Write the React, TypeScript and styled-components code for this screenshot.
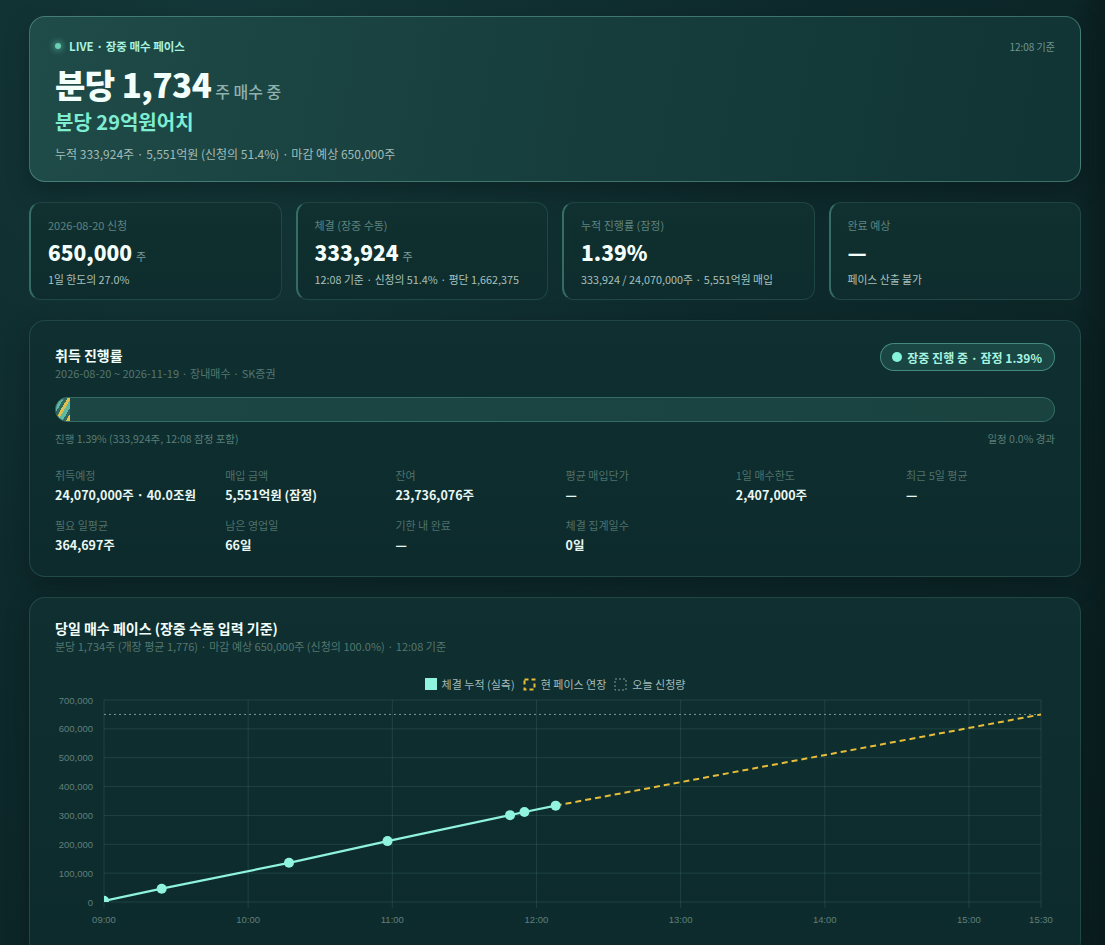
import React from 'react';
import styled, { createGlobalStyle } from 'styled-components';

const GlobalStyle = createGlobalStyle`
  html, body {
    margin: 0;
    padding: 0;
    background: #0c2426;
  }
  body {
    font-family: 'Noto Sans CJK KR', 'Noto Sans', sans-serif;
    color: #e8f5f2;
    background:
      linear-gradient(90deg, rgba(0, 0, 0, 0) 0%, rgba(0, 0, 0, 0) 97%, rgba(0, 0, 0, 0.25) 100%),
      radial-gradient(ellipse at 20% 0%, #143839 0%, #0e2a2c 45%, #0b2224 100%);
    min-height: 945px;
  }
`;

const Page = styled.div`
  width: 1052px;
  margin-left: 29px;
  padding: 16px 0 0;
  display: flex;
  flex-direction: column;
  gap: 20px;
`;

const Hero = styled.section`
  border-radius: 16px;
  border: 1px solid rgba(130, 210, 190, 0.38);
  background: linear-gradient(100deg, #1f4b48 0%, #173f3e 45%, #113434 100%);
  padding: 21px 25px 18px;
  box-shadow: 0 8px 24px rgba(0, 0, 0, 0.25);
`;

const LiveRow = styled.div`
  display: flex;
  align-items: center;
  justify-content: space-between;
  height: 16px;
`;

const LiveLabel = styled.div`
  display: flex;
  align-items: center;
  gap: 8px;
  font-size: 11.5px;
  font-weight: 700;
  color: #a8f2df;
`;

const Dot = styled.span<{ $size: number; $glow?: boolean }>`
  width: ${(p) => p.$size}px;
  height: ${(p) => p.$size}px;
  border-radius: 50%;
  background: ${(p) => (p.$glow ? '#6ccfb4' : '#86f3dc')};
  box-shadow: ${(p) => (p.$glow ? '0 0 6px 2px rgba(110, 220, 190, 0.45)' : 'none')};
  flex: none;
`;

const Stamp = styled.div`
  font-size: 10px;
  color: #6f9792;
`;

const BigLine = styled.div`
  margin-top: 10px;
  display: flex;
  align-items: baseline;
  gap: 4px;
  height: 40px;
  line-height: 40px;
`;

const BigNumber = styled.span`
  font-size: 33px;
  font-weight: 800;
  color: #f2fffb;
  letter-spacing: -0.5px;
`;

const BigUnit = styled.span`
  font-size: 16px;
  color: #8fb0ac;
  font-weight: 500;
`;

const Worth = styled.div`
  margin-top: 5px;
  font-size: 20px;
  height: 26px;
  line-height: 26px;
  font-weight: 700;
  color: #7eedd1;
`;

const HeroNote = styled.div`
  margin-top: 10px;
  font-size: 12px;
  height: 18px;
  line-height: 18px;
  color: #a2bcb8;
`;

const StatGrid = styled.div`
  display: grid;
  grid-template-columns: repeat(4, 1fr);
  gap: 14px;
`;

const StatCard = styled.div`
  border-radius: 12px;
  border: 1px solid rgba(120, 200, 180, 0.16);
  border-left: 2px solid rgba(120, 210, 190, 0.38);
  background: linear-gradient(180deg, #10312f 0%, #0e2c2d 100%);
  padding: 14px 17px 13px;
  height: 98px;
  box-sizing: border-box;
`;

const StatLabel = styled.div`
  font-size: 11px;
  height: 16px;
  line-height: 16px;
  color: #5f8480;
`;

const StatValue = styled.div`
  margin-top: 5px;
  display: flex;
  align-items: baseline;
  gap: 4px;
  line-height: 28px;
  height: 28px;
`;

const StatNumber = styled.span`
  font-size: 21px;
  font-weight: 800;
  color: #f4fffc;
`;

const StatUnit = styled.span`
  font-size: 11px;
  color: #7f9e9a;
`;

const StatSub = styled.div`
  margin-top: 5px;
  font-size: 10.8px;
  height: 16px;
  line-height: 16px;
  color: #a9c0bc;
`;

const Panel = styled.section<{ $height?: number; $top?: number }>`
  border-radius: 16px;
  border: 1px solid rgba(120, 200, 180, 0.18);
  background: linear-gradient(180deg, #0f2f30 0%, #0d2b2d 100%);
  padding: ${(p) => p.$top ?? 24}px 25px 22px;
  box-shadow: 0 8px 24px rgba(0, 0, 0, 0.25);
  ${(p) => (p.$height ? `height: ${p.$height}px; box-sizing: border-box;` : '')}
`;

const PanelHead = styled.div`
  display: flex;
  justify-content: space-between;
  align-items: flex-start;
`;

const PanelTitle = styled.div`
  font-size: 14px;
  height: 20px;
  line-height: 20px;
  font-weight: 700;
  color: #f2fffb;
`;

const PanelSub = styled.div`
  font-size: 11px;
  height: 17px;
  line-height: 17px;
  color: #54776f;
`;

const Badge = styled.div`
  margin-top: -2px;
  height: 28px;
  box-sizing: border-box;
  display: flex;
  align-items: center;
  gap: 5px;
  padding: 0 12px 0 11px;
  border-radius: 14px;
  border: 1px solid rgba(120, 220, 195, 0.45);
  background: rgba(90, 190, 165, 0.16);
  font-size: 12px;
  font-weight: 700;
  color: #a6f4e0;
`;

const Track = styled.div`
  margin-top: 15px;
  height: 25px;
  box-sizing: border-box;
  border-radius: 13px;
  border: 1px solid rgba(120, 200, 180, 0.3);
  background: linear-gradient(90deg, #1b4643 0%, #1a4340 100%);
  overflow: hidden;
`;

const Fill = styled.div`
  height: 100%;
  min-width: 14px;
  background: repeating-linear-gradient(
    120deg,
    #e0c04a 0 3px,
    #5db8a4 3px 7px,
    #2e6861 7px 10px
  );
`;

const TrackCaption = styled.div`
  margin-top: 9px;
  display: flex;
  justify-content: space-between;
  font-size: 10.5px;
  line-height: 16px;
  color: #5a7d77;
`;

const FactGrid = styled.div`
  margin-top: 20px;
  display: grid;
  grid-template-columns: repeat(6, 170.2px);
  row-gap: 13px;
`;

const Fact = styled.div`
  display: flex;
  flex-direction: column;
  gap: 3px;
`;

const FactLabel = styled.div`
  font-size: 11px;
  line-height: 16px;
  color: #4f716b;
`;

const FactValue = styled.div`
  font-size: 12.5px;
  line-height: 18px;
  font-weight: 700;
  color: #e9f7f3;
`;

const Legend = styled.div`
  margin-top: 21px;
  display: flex;
  justify-content: center;
  align-items: center;
  gap: 8px;
  font-size: 11px;
  line-height: 16px;
  color: #a4bcb8;
`;

const LegendItem = styled.div`
  display: flex;
  align-items: center;
  gap: 5px;
`;

const SolidSwatch = styled.span`
  width: 12px;
  height: 12px;
  background: #8ff3dd;
`;

function BoxSwatch({ color, dash, width }: { color: string; dash: string; width: number }) {
  return (
    <svg width="13" height="13" viewBox="0 0 13 13">
      <rect
        x={width / 2 + 0.5}
        y={width / 2 + 0.5}
        width={12 - width}
        height={12 - width}
        fill="none"
        stroke={color}
        strokeWidth={width}
        strokeDasharray={dash}
      />
    </svg>
  );
}

const ChartBox = styled.div`
  margin-top: 2px;
  height: 240px;
`;

// chart geometry (svg coordinates)
const X0 = 49;
const X1 = 986;
const Y0 = 6;
const Y1 = 208;
const T0 = 9 * 60;
const T1 = 15.5 * 60;
const VMAX = 700000;

const tx = (min: number) => X0 + ((min - T0) / (T1 - T0)) * (X1 - X0);
const vy = (v: number) => Y1 - (v / VMAX) * (Y1 - Y0);

const points: [number, number][] = [
  [9 * 60, 4000],
  [9 * 60 + 24, 46000],
  [10 * 60 + 17, 136000],
  [10 * 60 + 58, 211000],
  [11 * 60 + 49, 301000],
  [11 * 60 + 55, 312000],
  [12 * 60 + 8, 333924],
];

const xTicks: [number, string][] = [
  [9 * 60, '09:00'],
  [10 * 60, '10:00'],
  [11 * 60, '11:00'],
  [12 * 60, '12:00'],
  [13 * 60, '13:00'],
  [14 * 60, '14:00'],
  [15 * 60, '15:00'],
  [15.5 * 60, '15:30'],
];

function PaceChart() {
  const yTicks = [0, 100000, 200000, 300000, 400000, 500000, 600000, 700000];
  const last = points[points.length - 1];
  const line = points.map(([t, v]) => `${tx(t).toFixed(1)},${vy(v).toFixed(1)}`).join(' ');
  return (
    <svg width="1004" height="240" viewBox="0 0 1004 240" style={{ display: 'block', overflow: 'visible' }}>
      <defs>
        <clipPath id="plot">
          <rect x={X0} y={Y0 - 8} width={X1 - X0 + 8} height={Y1 - Y0 + 8} />
        </clipPath>
      </defs>
      {yTicks.map((v) => (
        <g key={v}>
          <line x1={X0} x2={X1} y1={vy(v)} y2={vy(v)} stroke="rgba(150,210,195,0.13)" strokeWidth="1" />
          <text
            x={X0 - 11}
            y={vy(v) + 3.5}
            textAnchor="end"
            fontSize="9.5"
            fontFamily="'Liberation Sans', Arial, sans-serif"
            fill="#5f807b"
          >
            {v.toLocaleString('en-US')}
          </text>
        </g>
      ))}
      {xTicks.map(([t, label]) => (
        <g key={label}>
          <line x1={tx(t)} x2={tx(t)} y1={Y0} y2={Y1 + 6} stroke="rgba(150,210,195,0.13)" strokeWidth="1" />
          <text
            x={tx(t)}
            y={Y1 + 21}
            textAnchor="middle"
            fontSize="9.5"
            fontFamily="'Liberation Sans', Arial, sans-serif"
            fill="#5f807b"
          >
            {label}
          </text>
        </g>
      ))}
      <line
        x1={X0}
        x2={X1}
        y1={vy(650000)}
        y2={vy(650000)}
        stroke="#7d9995"
        strokeWidth="1"
        strokeDasharray="2 3"
      />
      <line
        x1={tx(last[0])}
        y1={vy(last[1])}
        x2={X1}
        y2={vy(650000)}
        stroke="#e7bd3a"
        strokeWidth="2"
        strokeDasharray="6 4"
      />
      <g clipPath="url(#plot)">
        <polyline points={line} fill="none" stroke="#8ff3dd" strokeWidth="2.2" />
        {points.map(([t, v]) => (
          <circle key={t} cx={tx(t)} cy={vy(v)} r="5" fill="#8ff3dd" />
        ))}
      </g>
    </svg>
  );
}

const stats = [
  { label: '2026-08-20 신청', value: '650,000', unit: '주', sub: '1일 한도의 27.0%' },
  { label: '체결 (장중 수동)', value: '333,924', unit: '주', sub: '12:08 기준 · 신청의 51.4% · 평단 1,662,375' },
  { label: '누적 진행률 (잠정)', value: '1.39%', unit: '', sub: '333,924 / 24,070,000주 · 5,551억원 매입' },
  { label: '완료 예상', value: '—', unit: '', sub: '페이스 산출 불가' },
];

const facts = [
  { label: '취득예정', value: '24,070,000주 · 40.0조원' },
  { label: '매입 금액', value: '5,551억원 (잠정)' },
  { label: '잔여', value: '23,736,076주' },
  { label: '평균 매입단가', value: '—' },
  { label: '1일 매수한도', value: '2,407,000주' },
  { label: '최근 5일 평균', value: '—' },
  { label: '필요 일평균', value: '364,697주' },
  { label: '남은 영업일', value: '66일' },
  { label: '기한 내 완료', value: '—' },
  { label: '체결 집계일수', value: '0일' },
];

export default function App() {
  return (
    <>
      <GlobalStyle />
      <Page>
        <Hero>
          <LiveRow>
            <LiveLabel>
              <Dot $size={6} $glow />
              LIVE · 장중 매수 페이스
            </LiveLabel>
            <Stamp>12:08 기준</Stamp>
          </LiveRow>
          <BigLine>
            <BigNumber>분당 1,734</BigNumber>
            <BigUnit>주 매수 중</BigUnit>
          </BigLine>
          <Worth>분당 29억원어치</Worth>
          <HeroNote>누적 333,924주 · 5,551억원 (신청의 51.4%) · 마감 예상 650,000주</HeroNote>
        </Hero>

        <StatGrid>
          {stats.map((s) => (
            <StatCard key={s.label}>
              <StatLabel>{s.label}</StatLabel>
              <StatValue>
                <StatNumber>{s.value}</StatNumber>
                {s.unit && <StatUnit>{s.unit}</StatUnit>}
              </StatValue>
              <StatSub>{s.sub}</StatSub>
            </StatCard>
          ))}
        </StatGrid>

        <Panel>
          <PanelHead>
            <div>
              <PanelTitle>취득 진행률</PanelTitle>
              <PanelSub>2026-08-20 ~ 2026-11-19 · 장내매수 · SK증권</PanelSub>
            </div>
            <Badge>
              <Dot $size={10} />
              장중 진행 중 · 잠정 1.39%
            </Badge>
          </PanelHead>
          <Track>
            <Fill style={{ width: '1.39%' }} />
          </Track>
          <TrackCaption>
            <span>진행 1.39% (333,924주, 12:08 잠정 포함)</span>
            <span>일정 0.0% 경과</span>
          </TrackCaption>
          <FactGrid>
            {facts.map((f) => (
              <Fact key={f.label}>
                <FactLabel>{f.label}</FactLabel>
                <FactValue>{f.value}</FactValue>
              </Fact>
            ))}
          </FactGrid>
        </Panel>

        <Panel $height={360} $top={20}>
          <PanelTitle>당일 매수 페이스 (장중 수동 입력 기준)</PanelTitle>
          <PanelSub>분당 1,734주 (개장 평균 1,776) · 마감 예상 650,000주 (신청의 100.0%) · 12:08 기준</PanelSub>
          <Legend>
            <LegendItem>
              <SolidSwatch />
              체결 누적 (실측)
            </LegendItem>
            <LegendItem>
              <BoxSwatch color="#e7bd3a" dash="4 3" width={2} />
              현 페이스 연장
            </LegendItem>
            <LegendItem>
              <BoxSwatch color="#7d9995" dash="2 2" width={1} />
              오늘 신청량
            </LegendItem>
          </Legend>
          <ChartBox>
            <PaceChart />
          </ChartBox>
        </Panel>
      </Page>
    </>
  );
}
